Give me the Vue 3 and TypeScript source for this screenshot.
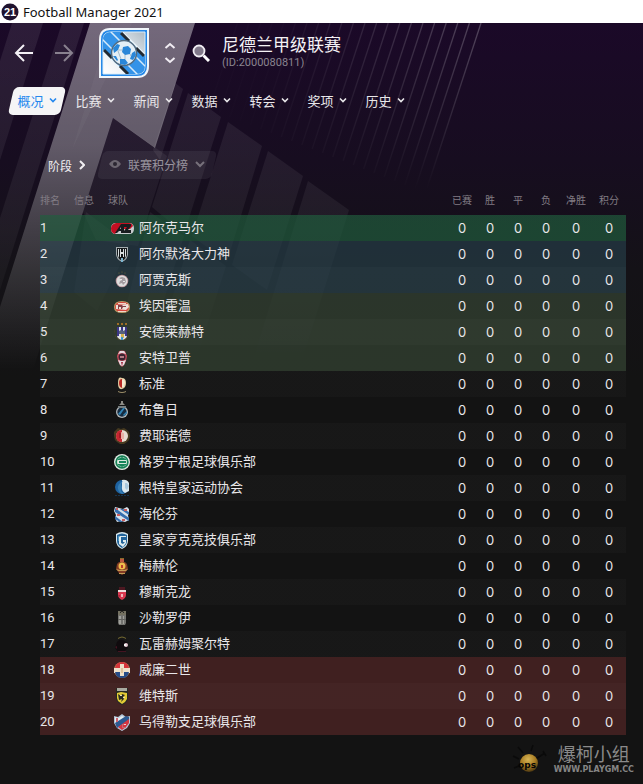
<script setup lang="ts">
type Shape = { d: string; fill: string }
type Zone = 'champion' | 'qualify' | 'playoff' | 'plain' | 'relegation'
interface Team { name: string; zone: Zone; badge: Shape[] }

const circle = (x: number, y: number, r: number): string =>
  `M${x - r} ${y}a${r} ${r} 0 1 0 ${2 * r} 0a${r} ${r} 0 1 0 ${-2 * r} 0z`
const s = (d: string, fill: string): Shape => ({ d, fill })
const shield = 'M6 3h12v7q0 5-6 8q-6-3-6-8z'

const menus: string[] = ['概况', '比赛', '新闻', '数据', '转会', '奖项', '历史']
const statNames: string[] = ['已赛', '胜', '平', '负', '净胜', '积分']

const teams: Team[] = [
  { name: '阿尔克马尔', zone: 'champion', badge: [
    s('M6 5h13q5 0 5 5.500t-5 5.500H6q-5 0-5-5.500t5-5.500z', '#c8cbcd'),
    s('M6 5h13q3 0 4 3l-3 3h-11l-4 5q-4-1-4-5.500t5-5.500z', '#c20f22'),
    s('M5 15l6-9h3v9h-3v-2h-2l-2 2zM14 6h7v2l-3 4h3v3h-7v-2l3-4h-3z', '#191c1f'),
    s('M10 11l1-2v2z', '#b9bfc3')] },
  { name: '阿尔默洛大力神', zone: 'qualify', badge: [
    s(shield, '#a5adb0'), s('M7 4h10v6q0 4-5 7q-5-3-5-7z', '#15191b'),
    s('M8 5h1v9l-1-2zM15 5h1v7l-1 2zM10 5h1v3h2V5h1v8h-1v-3h-2v3h-1z', '#d9dedf'), s('M11 14h2v4h-2z', '#7bb5cf')] },
  { name: '阿贾克斯', zone: 'qualify', badge: [
    s(circle(12, 11, 6.3), '#b58c93'), s(circle(12, 11, 5.5), '#dedddd'),
    s('M9 8l3-1l3 1l1 4l-3 3l-1-2l-3 1l1-3l2-1z', '#a39ba0'), s('M10 9h2v1h-2zM13 11h2v1h-2z', '#e7e6e7'),
    s(circle(9, 3, 0.6) + circle(12, 2, 0.6) + circle(15, 3, 0.6), '#73693c')] },
  { name: '埃因霍温', zone: 'playoff', badge: [
    s('M4 11q0-6 8-6t8 6t-8 6t-8-6z', '#bb9d67'), s('M5 11q0-5 7-5t7 5t-7 5t-7-5z', '#d7453e'),
    s('M6 9l12-1l1 3l-3 3l-10-1z', '#ece1d8'), s('M8 9h4l1 1h3v1h-3l-1 2h-1v-2H9v2H8z', '#854045'), s('M8 7h8v1H8zM8 15h8v1H8z', '#eed7c9')] },
  { name: '安德莱赫特', zone: 'playoff', badge: [
    s('M4 7q1 9 5 11h6q4-2 5-11l-1 2v6H5V9z', '#4c4629'), s('M7 5h10v9q-1 3-5 4q-4-1-5-4z', '#dde0ea'),
    s('M7 5h2v9H7zM15 5h2v9h-2zM11 5h2v4h-2z', '#3b3587'), s('M9 9l2-1l2 1l2-1v4H9z', '#57617b'),
    s('M11 12h3v4h-3z', '#d4b14c'), s('M11 15h2v3h-2z', '#3d99cb'), s('M7 1h2v2H7zM11 1h2v2h-2zM15 1h2v2h-2z', '#9e6d25')] },
  { name: '安特卫普', zone: 'playoff', badge: [
    s('M9 3q3-1 6 0l2 5l-1 5l-2 4l-2 2l-2-2l-2-4l-1-5z', '#c74c5d'), s('M10 3h4l2 3l-4-1l-4 1zM8 12l3 1h2l3-1l-2 5l-2 1l-2-1z', '#e6dce0'),
    s(circle(12, 9, 3.5), '#3a2430'), s('M10 8h4v2h-4z', '#b17b83'), s('M11 14h2l-1 4z', '#a3263c')] },
  { name: '标准', zone: 'plain', badge: [
    s('M12 4q4 0 4 5t-4 6t-4-6t4-5z', '#e2cca2'), s('M12 5v9q-3-1-3-5t3-4z', '#ba2924'), s('M12 6l2-1l1 3l-1 5h-2z', '#f6ead1'), s('M8 17q4 2 8 0v1q-4 2-8 0z', '#9b8d68')] },
  { name: '布鲁日', zone: 'plain', badge: [
    s('M11 1h2v2l2 2H9l2-2z', '#8d8c85'), s(circle(12, 12, 6), '#b0b5b7'), s(circle(12, 12, 4.7), '#152b40'),
    s('M8 14l5-6h2l-5 7zM13 15l4-4v2l-3 3z', '#3184b5'), s('M8 6h8v2H8z', '#777f81')] },
  { name: '费耶诺德', zone: 'plain', badge: [
    s('M4 6l2-2l2-2l3 1l3-1l3 2l2 2l1 4l-1 4l-2 2l-3 2h-4l-3-2l-2-2l-1-4z', '#463a20'),
    s(circle(12, 10, 6), '#e8dcd1'), s('M12 4v12q-6 0-6-6t6-6z', '#c62630'), s('M11 6l3 1v6h-3z', '#e9b1a5'), s('M9 7h2v5H9z', '#a21b24')] },
  { name: '格罗宁根足球俱乐部', zone: 'plain', badge: [
    s(circle(12, 10, 8), '#e1e9e4'), s(circle(12, 10, 6.7), '#178055'), s(circle(12, 10, 5), '#d8e7dd'),
    s('M8 7l4-2l4 2v1H8zM8 12h8v1l-4 2l-4-2z', '#16845a'), s('M9 9h7v2H9z', '#16845a')] },
  { name: '根特皇家运动协会', zone: 'plain', badge: [
    s(circle(12, 9, 7), '#1e62a0'), s('M12 2q5-1 7 3v8l-4 2q-4-2-3-7z', '#dce8ee'), s('M13 3l-2 3l1 4l-1 3l3 3q-5 0-6-5t5-8z', '#377eb4'),
    s('M15 5h2l2 3l-2 4l-2-2z', '#a9c9df'), s('M5 17h2v1H5zM8 17h2v1H8zM11 17h2v1h-2zM14 17h2v1h-2zM17 17h2v1h-2z', '#17344e')] },
  { name: '海伦芬', zone: 'plain', badge: [
    s('M5 3l4 1l4 1l4-2l2 2v4l-1 2l1 5l-4 2l-4-1l-4 1l-2-4l1-3l-2-4z', '#d6e1ea'),
    s('M5 4l14 10v3L5 8zM10 5l9 6V8l-6-3zM5 12l8 6h-3l-5-3z', '#366eaf'),
    s('M6 4h2v2H6zM14 5h3v2h-3zM7 10h3v2H7zM12 15h3v2h-3z', '#c85d5d')] },
  { name: '皇家亨克竞技俱乐部', zone: 'plain', badge: [
    s('M6 4q6-4 12 0v7q0 5-6 8q-6-3-6-8z', '#d8e7ec'), s('M7 5q5-3 10 0v6q0 4-5 7q-5-3-5-7z', '#22649b'),
    s('M10 6h6v1h-5v6l2 1l2-2h-2v-2h3v3l-3 4l-4-3V7z', '#deebee'), s('M8 6h1v5H8z', '#4b94bf')] },
  { name: '梅赫伦', zone: 'plain', badge: [
    s('M10 3h4v3h-4z', '#bd583f'), s('M7 8l2-2h6l2 2l1 5l-3 4l-3 2l-3-2l-3-4z', '#843c25'),
    s(circle(12, 10, 3.5), '#efbd4c'), s('M11 9h2v3h-2z', '#bb3e2f'), s('M6 13l4 1h4l4-1l-2 2h-8zM9 17h6v1H9z', '#c39b55'), s('M10 2h4v1h-4z', '#866c2b')] },
  { name: '穆斯克龙', zone: 'plain', badge: [
    s('M9 5h6v3H9z', '#4c1821'), s('M8 8h8v5q0 3-4 5q-4-2-4-5z', '#d93850'), s('M8 8h8v2H8z', '#ecdcdd'), s('M11 12h2v3h-2z', '#efb5bb'), s('M8 13h2v2z', '#ad2036')] },
  { name: '沙勒罗伊', zone: 'plain', badge: [
    s('M8 3h2l2 1l2-1h2v4H8z', '#747161'), s('M10 4h1v1h-1zM13 4h1v1h-1z', '#282725'), s('M8 7h8v8l-1 2H9l-1-2z', '#73736f'),
    s('M9 8h2v8H9zM13 8h1v8h-1z', '#a0a09b'), s('M8 11h8v1H8z', '#62625f')] },
  { name: '瓦雷赫姆聚尔特', zone: 'plain', badge: [
    s('M8 5q4-3 8 0v-1q-4-3-8 0z', '#756a31'), s('M6 11q1-6 7-5l5 3v5l-4 4H8l-3-4z', '#100b0e'),
    s(circle(16, 11, 2), '#e6c9d2'), s('M14 10h2v2h-2z', '#f1f0f1'), s('M5 13l2-1v3zM8 17h8v1H8z', '#431421')] },
  { name: '威廉二世', zone: 'relegation', badge: [
    s(circle(12, 10, 8), '#bb8c57'), s('M5 8q1-6 7-6t7 6z', '#d5353b'), s('M4 8h16v5H4z', '#f1e1ce'), s('M5 12h14q-1 6-7 6t-7-6z', '#274c88'),
    s('M10 4h4v4h4v4h-4v4h-4v-4H6V8h4z', '#eee0c9'), s('M11 8h2v5h-2z', '#dfc49d')] },
  { name: '维特斯', zone: 'relegation', badge: [
    s('M6 2h12v10q0 4-6 7q-6-3-6-7z', '#252923'), s('M7 2h10v3H7z', '#a9aaa0'), s('M7 7l4-1l6 1v6l-2 3l-3 2l-4-3l-1-3z', '#e2cb36'),
    s('M8 8l3 2l1-2l3 1l-2 2l1 2l-3 3l1-3l-3 1z', '#282a22'), s('M10 9h2v1h-2zM13 11h2v1h-2z', '#e7e1b1')] },
  { name: '乌得勒支足球俱乐部', zone: 'relegation', badge: [
    s('M4 4l4 1l4-3l4 3l4-1v7l-3 5l-5 3l-5-3l-3-5z', '#b3c5d8'), s('M5 5l4 1l3-2l4 2L6 13l-1-3z', '#e6edf0'),
    s('M5 11L16 4l3 1v3L7 16z', '#2c5991'), s('M19 7v4l-3 4l-4 3l-4-3z', '#d53540'),
    s('M6 6h2v4H6zM12 12h4v1h-3v2h3v1h-4z', '#cc6572'), s('M14 12h2v1h-2z', '#f1c9cd')] },
]

const rays = Array.from({ length: 22 }, (_, i) => {
  const x = 481 - i * 11.6
  const length = 170 - i * 4
  return { x, x2: x - length * 0.327, y2: 23 + length, opacity: Math.max(0.06, 1 - i * 0.055) }
})
</script>

<template>
  <div class="window">
    <svg class="backdrop" width="643" height="784" viewBox="0 0 643 784" aria-hidden="true">
      <defs>
        <linearGradient id="beam" gradientUnits="userSpaceOnUse" x1="0" y1="23" x2="0" y2="370">
          <stop offset="0" stop-color="#fff" stop-opacity=".39" />
          <stop offset=".35" stop-color="#fff" stop-opacity=".32" />
          <stop offset=".6" stop-color="#fff" stop-opacity=".19" />
          <stop offset="1" stop-color="#fff" stop-opacity="0" />
        </linearGradient>
        <linearGradient id="haze" gradientUnits="userSpaceOnUse" x1="0" y1="23" x2="0" y2="370">
          <stop offset="0" stop-color="#fff" stop-opacity=".08" />
          <stop offset=".6" stop-color="#fff" stop-opacity=".05" />
          <stop offset="1" stop-color="#fff" stop-opacity="0" />
        </linearGradient>
        <linearGradient id="ray" gradientUnits="userSpaceOnUse" x1="0" y1="23" x2="0" y2="190">
          <stop offset="0" stop-color="#fff" stop-opacity=".24" />
          <stop offset="1" stop-color="#fff" stop-opacity="0" />
        </linearGradient>
      </defs>
      <g fill="url(#haze)">
        <path d="M12 23H43L0 160V61z" />
        <path d="M62 23H84L0 290V218z" />
        <path d="M125 126L167 156L138 246L96 240L83 212L113 118z" />
        <path d="M175 83L183 89L160 160L153 150z" />
        <path d="M188 93L221 117L184 234L152 207z" />
        <path d="M228 122L262 146L227 262L192 236z" />
        <path d="M268 151L303 176L267 290L232 265z" />
        <path d="M308 181L349 210L299 370H250z" />
        <path d="M150 212L184 236L142 370H110z" />
        <path d="M190 240L226 266L193 370H150z" />
        <path d="M86 212L130 245L97 311L74 292z" />
      </g>
      <path d="M90 23H195L155 148L113 118L83 212L33 370H-20z" fill="url(#beam)" />
      <path d="M111 23H132L72 150L88 98z" fill="#fff" fill-opacity=".03" />
      <line v-for="ray in rays" :key="ray.x" :x1="ray.x" y1="23" :x2="ray.x2" :y2="ray.y2" stroke="url(#ray)" stroke-width="1.300" :stroke-opacity="ray.opacity" />
    </svg>

    <div class="titlebar">
      <svg width="18" height="18" viewBox="0 0 18 18" aria-hidden="true">
        <circle cx="9" cy="9" r="8.500" fill="#20132f" />
        <text x="9" y="13" text-anchor="middle" class="logo-number">21</text>
      </svg>
      <span>Football Manager 2021</span>
    </div>

    <header class="header">
      <button class="icon-button" aria-label="后退">
        <svg width="20" height="20" viewBox="0 0 20 20" fill="none" stroke="#f4f1f6" stroke-width="2"><path d="M10 2L2 10L10 18M2 10H19" /></svg>
      </button>
      <button class="icon-button" aria-label="前进">
        <svg width="20" height="20" viewBox="0 0 20 20" fill="none" stroke="#89818f" stroke-width="2"><path d="M10 2L18 10L10 18M18 10H1" /></svg>
      </button>
      <svg class="crest" width="50" height="50" viewBox="0 0 50 50" aria-hidden="true">
        <defs>
          <clipPath id="crest-clip"><path d="M12 4H46V38Q46 46 38 46H4V12Q4 4 12 4z" /></clipPath>
          <linearGradient id="silver" x1="0" y1="1" x2="1" y2="0"><stop offset="0" stop-color="#fff" /><stop offset=".6" stop-color="#dfe6ec" /><stop offset="1" stop-color="#aebbc4" /></linearGradient>
        </defs>
        <path d="M11 1H49V38Q49 49 38 49H1V12Q1 1 11 1z" fill="#2588e7" stroke="#f1f6fa" stroke-width="2" />
        <path d="M12 4H46V38Q46 46 38 46H4V12Q4 4 12 4z" fill="url(#silver)" stroke="#d9edfb" />
        <g clip-path="url(#crest-clip)" fill="none">
          <path d="M2 2L48 48" stroke="#eaf5fb" stroke-width="29" />
          <path d="M2 2L48 48" stroke="#3493e8" stroke-width="25" />
          <path d="M-3 5L43 51M5 -3L51 43" stroke="#d5eafa" stroke-width="1.500" />
          <path d="M5 22L13 30M21 38L29 46M22 5L30 13M37 20L45 28" stroke="#222a32" stroke-width="3" />
        </g>
        <circle cx="25" cy="25" r="12.500" fill="#e4eff6" stroke="#526b80" stroke-width="1.500" />
        <path d="M24 19l5-1l3 3l-1 5l-5 1l-3-3zM14 20l4-4l3 1l-2 5l-4 3zM33 25l3-2l1 4l-3 5l-3-1zM21 31l5 0l3 4l-3 2l-5-1zM14 28l3 0l2 4l-1 1z" fill="#2986d8" />
        <path d="M19 22l4 0M19 23l3 8M31 26l1 2M26 31l0-4" stroke="#a5bccb" />
      </svg>
      <div class="stepper">
        <button class="icon-button" aria-label="上一个"><svg width="12" height="8" viewBox="0 0 12 8" fill="none" stroke="#f1edf3" stroke-width="2"><path d="M1.500 6L6 2L10.500 6" /></svg></button>
        <button class="icon-button" aria-label="下一个"><svg width="12" height="8" viewBox="0 0 12 8" fill="none" stroke="#f1edf3" stroke-width="2"><path d="M1.500 2L6 6L10.500 2" /></svg></button>
      </div>
      <button class="icon-button" aria-label="搜索">
        <svg width="18" height="18" viewBox="0 0 18 18"><circle cx="7" cy="7" r="5.500" fill="#81798a" stroke="#f0edf2" stroke-width="1.800" /><path d="M11.500 11.500L17 17" stroke="#fff" stroke-width="3" /></svg>
      </button>
      <div class="heading">
        <h1>尼德兰甲级联赛</h1>
        <p>(ID:2000080811)</p>
      </div>
    </header>

    <nav class="menu">
      <button v-for="(item, i) in menus" :key="item" :class="{ active: i === 0 }">
        <span>{{ item }}</span>
        <svg width="8" height="6" viewBox="0 0 8 6" fill="none" stroke="currentColor" stroke-width="1.600"><path d="M1 1.500L4 4.500L7 1.500" /></svg>
      </button>
    </nav>

    <main>
      <div class="stage">
        <a href="#stage">阶段
          <svg width="6" height="10" viewBox="0 0 6 10" fill="none" stroke="currentColor" stroke-width="2"><path d="M1 1L5 5L1 9" /></svg>
        </a>
        <button>
          <svg width="12" height="10" viewBox="0 0 12 10"><path d="M0 5Q6-3 12 5Q6 13 0 5z" fill="#6c6670" /><circle cx="6" cy="5" r="2" fill="#2b2631" /></svg>
          <span>联赛积分榜</span>
          <svg width="10" height="7" viewBox="0 0 10 7" fill="none" stroke="#77717b" stroke-width="2"><path d="M1 1L5 5L9 1" /></svg>
        </button>
      </div>

      <table>
        <colgroup>
          <col class="rank-col"><col class="rank-col"><col>
          <col class="stat-col"><col class="stat-col"><col class="stat-col"><col class="stat-col"><col class="diff-col"><col class="rank-col">
        </colgroup>
        <thead>
          <tr>
            <th>排名</th><th>信息</th><th>球队</th>
            <th v-for="stat in statNames" :key="stat" class="stat">{{ stat }}</th>
          </tr>
        </thead>
        <tbody>
          <tr v-for="(team, i) in teams" :key="team.name" :class="team.zone">
            <td class="rank">{{ i + 1 }}</td>
            <td></td>
            <td>
              <span class="team">
                <svg width="24" height="20" viewBox="0 0 24 20" aria-hidden="true"><path v-for="(shape, n) in team.badge" :key="n" :d="shape.d" :fill="shape.fill" /></svg>
                {{ team.name }}
              </span>
            </td>
            <td v-for="stat in statNames" :key="stat" class="stat">0</td>
          </tr>
        </tbody>
      </table>
    </main>

    <footer>
      <svg width="36" height="32" viewBox="0 0 36 32" aria-hidden="true">
        <defs><radialGradient id="gold" cx=".45" cy=".3" r=".75"><stop offset="0" stop-color="#d7b556" /><stop offset=".55" stop-color="#a77b22" /><stop offset="1" stop-color="#3c2b0e" /></radialGradient></defs>
        <path d="M11 9L6 3M19 7L21 1M7 15L1 12M25 14L33 9M31 7L34 12M7 22L2 24" stroke="#0a0a0a" stroke-width="1.500" fill="none" />
        <circle cx="17" cy="19" r="9" fill="url(#gold)" />
        <text x="15" y="24" text-anchor="middle" class="bug-text">ops</text>
      </svg>
      <div class="mark"><strong>爆柯小组</strong><span>WWW.PLAYGM.CC</span></div>
    </footer>
  </div>
</template>

<style>
body { margin: 0; background: #141414; }
</style>

<style scoped>
.window {
  position: relative;
  box-sizing: border-box;
  min-height: 100vh;
  display: flex;
  flex-direction: column;
  overflow: hidden;
  background: linear-gradient(#1b0928 23px, #170d20 160px, #141217 270px, #131313 380px);
  color: #e9e7ea;
  font-family: "Liberation Sans", "Noto Sans CJK SC", sans-serif;
  font-size: 13px;
}
.backdrop { position: absolute; left: 0; top: 0; pointer-events: none; }
.titlebar, .header, .menu, main, footer { position: relative; }
.titlebar {
  height: 23px;
  display: flex;
  align-items: center;
  gap: 4px;
  padding-left: 1px;
  background: #fff;
  color: #111;
  font: 13px "Noto Sans", sans-serif;
}
.logo-number { fill: #fff; font: bold 11px "Liberation Sans", sans-serif; }
button { padding: 0; border: 0; background: none; color: inherit; font: inherit; cursor: pointer; }
.icon-button { display: flex; }
.header { display: flex; align-items: center; height: 60px; padding: 0 14px; gap: 20px; }
.crest { margin-left: 5px; }
.stepper { display: flex; flex-direction: column; gap: 6px; margin-left: -5px; }
.stepper + .icon-button { margin-left: -4px; }
.heading { margin: -4px 0 0 -8px; }
h1 { margin: 0; font-size: 17px; line-height: 24px; font-weight: 400; color: #f4f2f5; font-family: "Noto Sans CJK SC", sans-serif; }
p { margin: 0; font: 11px/14px Roboto, sans-serif; color: #8b8590; }
.menu { display: flex; height: 28px; margin-top: 4px; padding-left: 8px; }
.menu button { position: relative; display: flex; align-items: center; justify-content: center; gap: 5px; width: 58px; padding-bottom: 2px; }
.menu span, .menu svg { position: relative; }
.menu .active { color: #2487ee; }
.menu .active::before { content: ""; position: absolute; inset: 0 3px; border-radius: 5px; background: #f5f5f6; transform: skewX(-13deg); }
main { padding: 36px 17px 0 40px; }
.stage { display: flex; align-items: center; height: 28px; padding-left: 8px; gap: 12px; font-size: 12px; }
.stage a { display: flex; align-items: center; gap: 7px; color: #f1eff2; text-decoration: none; }
.stage button { position: relative; display: flex; align-items: center; height: 28px; padding: 0 12px 2px; gap: 7px; color: #99949e; }
.stage button::before { content: ""; position: absolute; inset: 0 3px; border-radius: 5px; background: rgb(255 255 255 / 6%); transform: skewX(-13deg); }
.stage button > * { position: relative; }
table { width: 100%; margin-top: 9px; table-layout: fixed; border-collapse: collapse; }
.rank-col { width: 34px; }
.stat-col { width: 28px; }
.diff-col { width: 32px; }
th { height: 25px; padding: 0 0 2px; font-size: 10px; line-height: 12px; font-weight: 400; color: #817c84; text-align: left; white-space: nowrap; }
td { height: 26px; padding: 0; line-height: 26px; white-space: nowrap; }
.rank { font: 13px/26px Roboto, sans-serif; }
td.stat { font: 13px/25px Inter, sans-serif; }
.stat { text-align: center; }
.team { display: flex; align-items: center; height: 26px; padding-left: 2px; gap: 5px; }
tbody tr:nth-child(odd) { background-image: linear-gradient(rgb(255 255 255 / 2%), rgb(255 255 255 / 2%)); }
.champion { background-color: rgb(27 89 57 / 67%); }
.qualify { background-color: rgb(41 72 84 / 55%); }
.playoff { background-color: rgb(61 80 58 / 58%); }
.relegation { background-color: #402020; }
footer { display: flex; align-items: center; justify-content: flex-end; gap: 6px; margin-top: auto; padding: 0 9px 8px 0; }
.bug-text { fill: #050505; font: bold 9px "DejaVu Sans", sans-serif; }
.mark { display: flex; flex-direction: column; align-items: center; color: #8a8a8a; }
.mark strong { font: 18px/20px "Liberation Serif", "Noto Sans CJK SC", serif; }
.mark span { font: bold 8px/10px "DejaVu Sans", sans-serif; color: #858585; }
</style>
